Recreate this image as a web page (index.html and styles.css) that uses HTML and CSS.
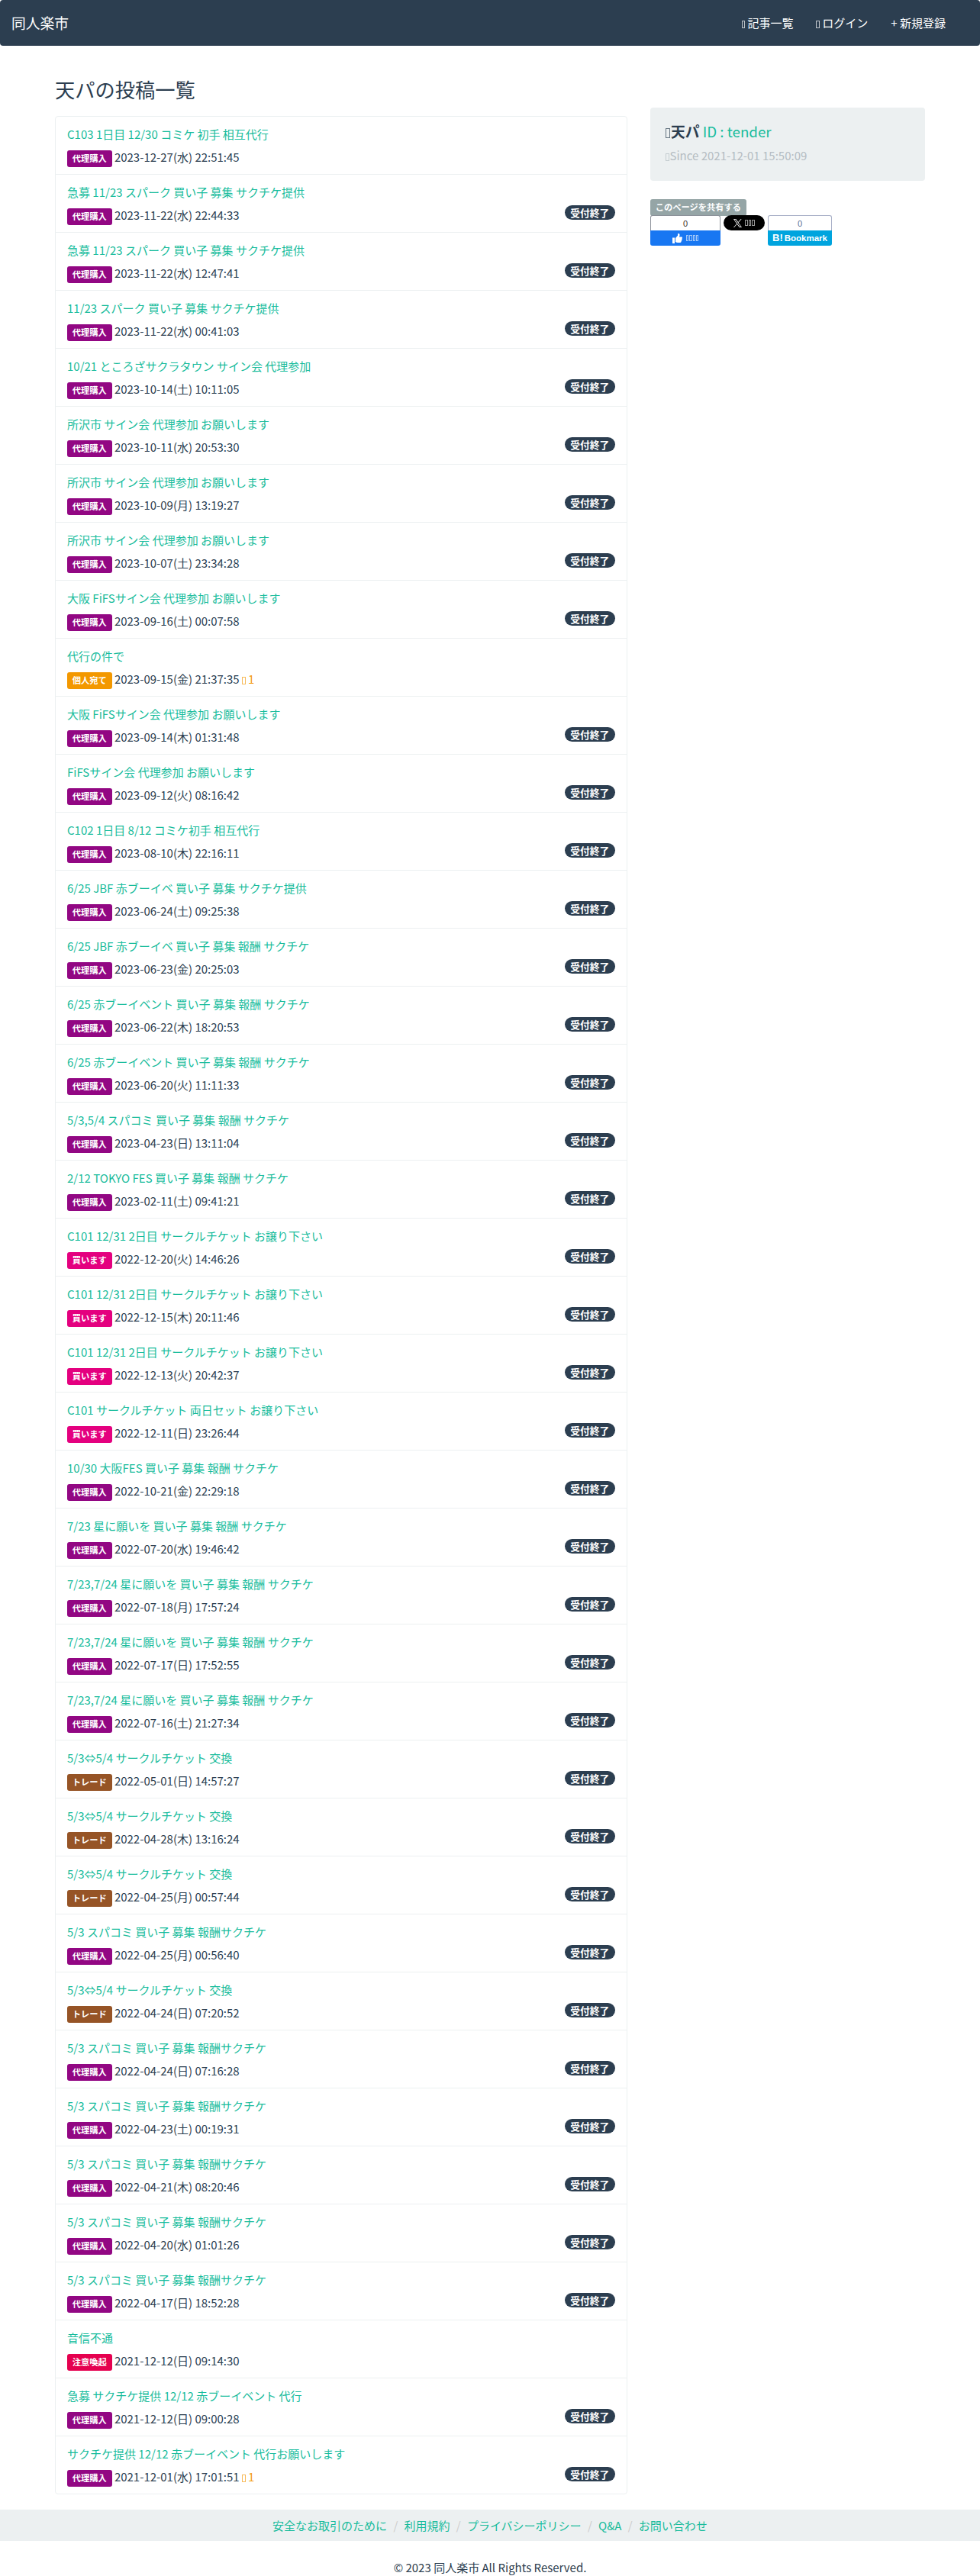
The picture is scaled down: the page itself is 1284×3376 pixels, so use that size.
FILE: index.html
```html
<!DOCTYPE html>
<html lang="ja">
<head>
<meta charset="utf-8">
<title>天パの投稿一覧 - 同人楽市</title>
<link rel="stylesheet" href="styles.css">
</head>
<body>
<header class="navbar">
  <a class="brand" href="#">同人楽市</a>
  <nav class="nav">
    <a href="#"><i class="glyph"></i> 記事一覧</a>
    <a href="#"><i class="glyph"></i> ログイン</a>
    <a href="#">+ 新規登録</a>
  </nav>
</header>
<div class="container">
  <main class="main">
    <h1 class="page-title">天パの投稿一覧</h1>
    <ul class="posts">
      <li><div><a href="#">C103 1日目 12/30 コミケ 初手 相互代行</a><p><b class="tag proxy">代理購入</b> 2023-12-27(水) 22:51:45</p></div></li>
      <li><div><a href="#">急募 11/23 スパーク 買い子 募集 サクチケ提供</a><p><b class="tag proxy">代理購入</b> 2023-11-22(水) 22:44:33</p></div><span class="closed">受付終了</span></li>
      <li><div><a href="#">急募 11/23 スパーク 買い子 募集 サクチケ提供</a><p><b class="tag proxy">代理購入</b> 2023-11-22(水) 12:47:41</p></div><span class="closed">受付終了</span></li>
      <li><div><a href="#">11/23 スパーク 買い子 募集 サクチケ提供</a><p><b class="tag proxy">代理購入</b> 2023-11-22(水) 00:41:03</p></div><span class="closed">受付終了</span></li>
      <li><div><a href="#">10/21 ところざサクラタウン サイン会 代理参加</a><p><b class="tag proxy">代理購入</b> 2023-10-14(土) 10:11:05</p></div><span class="closed">受付終了</span></li>
      <li><div><a href="#">所沢市 サイン会 代理参加 お願いします</a><p><b class="tag proxy">代理購入</b> 2023-10-11(水) 20:53:30</p></div><span class="closed">受付終了</span></li>
      <li><div><a href="#">所沢市 サイン会 代理参加 お願いします</a><p><b class="tag proxy">代理購入</b> 2023-10-09(月) 13:19:27</p></div><span class="closed">受付終了</span></li>
      <li><div><a href="#">所沢市 サイン会 代理参加 お願いします</a><p><b class="tag proxy">代理購入</b> 2023-10-07(土) 23:34:28</p></div><span class="closed">受付終了</span></li>
      <li><div><a href="#">大阪 FiFSサイン会 代理参加 お願いします</a><p><b class="tag proxy">代理購入</b> 2023-09-16(土) 00:07:58</p></div><span class="closed">受付終了</span></li>
      <li><div><a href="#">代行の件で</a><p><b class="tag personal">個人宛て</b> 2023-09-15(金) 21:37:35 <span class="comments"><i class="glyph"></i> 1</span></p></div></li>
      <li><div><a href="#">大阪 FiFSサイン会 代理参加 お願いします</a><p><b class="tag proxy">代理購入</b> 2023-09-14(木) 01:31:48</p></div><span class="closed">受付終了</span></li>
      <li><div><a href="#">FiFSサイン会 代理参加 お願いします</a><p><b class="tag proxy">代理購入</b> 2023-09-12(火) 08:16:42</p></div><span class="closed">受付終了</span></li>
      <li><div><a href="#">C102 1日目 8/12 コミケ初手 相互代行</a><p><b class="tag proxy">代理購入</b> 2023-08-10(木) 22:16:11</p></div><span class="closed">受付終了</span></li>
      <li><div><a href="#">6/25 JBF 赤ブーイベ 買い子 募集 サクチケ提供</a><p><b class="tag proxy">代理購入</b> 2023-06-24(土) 09:25:38</p></div><span class="closed">受付終了</span></li>
      <li><div><a href="#">6/25 JBF 赤ブーイベ 買い子 募集 報酬 サクチケ</a><p><b class="tag proxy">代理購入</b> 2023-06-23(金) 20:25:03</p></div><span class="closed">受付終了</span></li>
      <li><div><a href="#">6/25 赤ブーイベント 買い子 募集 報酬 サクチケ</a><p><b class="tag proxy">代理購入</b> 2023-06-22(木) 18:20:53</p></div><span class="closed">受付終了</span></li>
      <li><div><a href="#">6/25 赤ブーイベント 買い子 募集 報酬 サクチケ</a><p><b class="tag proxy">代理購入</b> 2023-06-20(火) 11:11:33</p></div><span class="closed">受付終了</span></li>
      <li><div><a href="#">5/3,5/4 スパコミ 買い子 募集 報酬 サクチケ</a><p><b class="tag proxy">代理購入</b> 2023-04-23(日) 13:11:04</p></div><span class="closed">受付終了</span></li>
      <li><div><a href="#">2/12 TOKYO FES 買い子 募集 報酬 サクチケ</a><p><b class="tag proxy">代理購入</b> 2023-02-11(土) 09:41:21</p></div><span class="closed">受付終了</span></li>
      <li><div><a href="#">C101 12/31 2日目 サークルチケット お譲り下さい</a><p><b class="tag buy">買います</b> 2022-12-20(火) 14:46:26</p></div><span class="closed">受付終了</span></li>
      <li><div><a href="#">C101 12/31 2日目 サークルチケット お譲り下さい</a><p><b class="tag buy">買います</b> 2022-12-15(木) 20:11:46</p></div><span class="closed">受付終了</span></li>
      <li><div><a href="#">C101 12/31 2日目 サークルチケット お譲り下さい</a><p><b class="tag buy">買います</b> 2022-12-13(火) 20:42:37</p></div><span class="closed">受付終了</span></li>
      <li><div><a href="#">C101 サークルチケット 両日セット お譲り下さい</a><p><b class="tag buy">買います</b> 2022-12-11(日) 23:26:44</p></div><span class="closed">受付終了</span></li>
      <li><div><a href="#">10/30 大阪FES 買い子 募集 報酬 サクチケ</a><p><b class="tag proxy">代理購入</b> 2022-10-21(金) 22:29:18</p></div><span class="closed">受付終了</span></li>
      <li><div><a href="#">7/23 星に願いを 買い子 募集 報酬 サクチケ</a><p><b class="tag proxy">代理購入</b> 2022-07-20(水) 19:46:42</p></div><span class="closed">受付終了</span></li>
      <li><div><a href="#">7/23,7/24 星に願いを 買い子 募集 報酬 サクチケ</a><p><b class="tag proxy">代理購入</b> 2022-07-18(月) 17:57:24</p></div><span class="closed">受付終了</span></li>
      <li><div><a href="#">7/23,7/24 星に願いを 買い子 募集 報酬 サクチケ</a><p><b class="tag proxy">代理購入</b> 2022-07-17(日) 17:52:55</p></div><span class="closed">受付終了</span></li>
      <li><div><a href="#">7/23,7/24 星に願いを 買い子 募集 報酬 サクチケ</a><p><b class="tag proxy">代理購入</b> 2022-07-16(土) 21:27:34</p></div><span class="closed">受付終了</span></li>
      <li><div><a href="#">5/3⇔5/4 サークルチケット 交換</a><p><b class="tag trade">トレード</b> 2022-05-01(日) 14:57:27</p></div><span class="closed">受付終了</span></li>
      <li><div><a href="#">5/3⇔5/4 サークルチケット 交換</a><p><b class="tag trade">トレード</b> 2022-04-28(木) 13:16:24</p></div><span class="closed">受付終了</span></li>
      <li><div><a href="#">5/3⇔5/4 サークルチケット 交換</a><p><b class="tag trade">トレード</b> 2022-04-25(月) 00:57:44</p></div><span class="closed">受付終了</span></li>
      <li><div><a href="#">5/3 スパコミ 買い子 募集 報酬サクチケ</a><p><b class="tag proxy">代理購入</b> 2022-04-25(月) 00:56:40</p></div><span class="closed">受付終了</span></li>
      <li><div><a href="#">5/3⇔5/4 サークルチケット 交換</a><p><b class="tag trade">トレード</b> 2022-04-24(日) 07:20:52</p></div><span class="closed">受付終了</span></li>
      <li><div><a href="#">5/3 スパコミ 買い子 募集 報酬サクチケ</a><p><b class="tag proxy">代理購入</b> 2022-04-24(日) 07:16:28</p></div><span class="closed">受付終了</span></li>
      <li><div><a href="#">5/3 スパコミ 買い子 募集 報酬サクチケ</a><p><b class="tag proxy">代理購入</b> 2022-04-23(土) 00:19:31</p></div><span class="closed">受付終了</span></li>
      <li><div><a href="#">5/3 スパコミ 買い子 募集 報酬サクチケ</a><p><b class="tag proxy">代理購入</b> 2022-04-21(木) 08:20:46</p></div><span class="closed">受付終了</span></li>
      <li><div><a href="#">5/3 スパコミ 買い子 募集 報酬サクチケ</a><p><b class="tag proxy">代理購入</b> 2022-04-20(水) 01:01:26</p></div><span class="closed">受付終了</span></li>
      <li><div><a href="#">5/3 スパコミ 買い子 募集 報酬サクチケ</a><p><b class="tag proxy">代理購入</b> 2022-04-17(日) 18:52:28</p></div><span class="closed">受付終了</span></li>
      <li><div><a href="#">音信不通</a><p><b class="tag alert">注意喚起</b> 2021-12-12(日) 09:14:30</p></div></li>
      <li><div><a href="#">急募 サクチケ提供 12/12 赤ブーイベント 代行</a><p><b class="tag proxy">代理購入</b> 2021-12-12(日) 09:00:28</p></div><span class="closed">受付終了</span></li>
      <li><div><a href="#">サクチケ提供 12/12 赤ブーイベント 代行お願いします</a><p><b class="tag proxy">代理購入</b> 2021-12-01(水) 17:01:51 <span class="comments"><i class="glyph"></i> 1</span></p></div><span class="closed">受付終了</span></li>
    </ul>
  </main>
  <aside class="side">
    <section class="profile">
      <p class="name"><i class="glyph"></i><b>天パ</b> <a href="#">ID : tender</a></p>
      <p class="since"><i class="glyph"></i>Since 2021-12-01 15:50:09</p>
    </section>
    <b class="tag share-label">このページを共有する</b>
    <div class="share">
      <div class="share-box facebook">
        <span class="count">0</span>
        <a class="action" href="#">
          <svg width="13" height="13" viewBox="0 0 13 13"><path fill="#fff" d="M0 5.5h3V13H0zM4 6l3-3.2V1c0-.7.5-1 1-1 1 0 1.600.8 1.600 1.900L9 4.600h3c.7 0 1 .5 1 1.100 0 .5-.2.800-.5 1 .2.300.3.600.2 1-.1.400-.3.600-.6.800.2.700.1 1.300-.5 1.600.2 1-.3 1.900-1.500 1.900H7c-1.200 0-2-.4-3-.9z"/></svg>
          <span class="boxes"><i></i><i></i><i></i><i></i></span>
        </a>
      </div>
      <a class="xpost" href="#">
        <svg width="11" height="11" viewBox="0 0 24 24"><path fill="#fff" d="M14.300 10.200 23.200 0h-2.100l-7.700 8.800L7.200 0H0l9.300 13.400L0 24h2.100l8.100-9.300L16.800 24H24zM2.900 1.600h3.200l15 20.900h-3.200z"/></svg>
        <span class="boxes"><i></i><i></i><i></i></span>
      </a>
      <div class="share-box hatena">
        <span class="count">0</span>
        <a class="action" href="#"><b class="mark">B!</b><b>Bookmark</b></a>
      </div>
    </div>
  </aside>
</div>
<footer>
  <nav class="footer-nav">
    <a href="#">安全なお取引のために</a><a href="#">利用規約</a><a href="#">プライバシーポリシー</a><a href="#">Q&amp;A</a><a href="#">お問い合わせ</a>
  </nav>
  <p class="copyright">© 2023 同人楽市 All Rights Reserved.</p>
</footer>
</body>
</html>
```
FILE: styles.css
```css
* { box-sizing: border-box; }

body {
  margin: 0;
  font: 15px/22.5px "Noto Sans CJK JP", sans-serif;
  color: #2c3e50;
  background: #fff;
}

p, h1, ul { margin: 0; padding: 0; }
a { color: #18bc9c; text-decoration: none; }

.glyph {
  display: inline-block;
  width: 4.5px;
  height: 10px;
  border: 1px solid;
  opacity: .7;
  vertical-align: -1px;
}

/* header */
.navbar {
  display: flex;
  justify-content: space-between;
  align-items: center;
  height: 60px;
  padding: 0 30px 0 15px;
  border-radius: 4px;
  background: #2c3e50;
}
.navbar a { color: #fff; }
.brand { font-size: 18.75px; line-height: 28px; }
.nav { display: flex; padding-top: 1px; }
.nav a { padding: 0 15px; }

/* columns */
.container {
  display: grid;
  grid-template-columns: 750px 360px;
  gap: 30px;
  width: 1140px;
  margin: 0 auto;
}
.page-title {
  margin: 42px 0 19px;
  font-size: 26.25px;
  line-height: 31px;
  font-weight: 400;
}

/* post list */
.posts {
  list-style: none;
  border: 1px solid #ecf0f1;
  border-radius: 4px;
}
.posts li {
  display: flex;
  justify-content: space-between;
  height: 76px;
  padding: 12px 15px;
  border-bottom: 1px solid #ecf0f1;
}
.posts li:last-child { height: 75px; border-bottom: 0; }
.posts li > div > a { display: block; line-height: 22px; }
.posts p { margin-top: 8px; }
.comments { color: #f39c12; }

.tag {
  display: inline-block;
  padding: 5px 6.75px 6px;
  border-radius: 3px;
  color: #fff;
  font-size: 11.25px;
  line-height: 11px;
  font-weight: 700;
}
.proxy { background: #920783; }
.personal { background: #f39800; }
.buy { background: #e4007f; }
.trade { background: #965426; }
.alert { background: #e5004f; }

.closed {
  align-self: flex-end;
  margin-bottom: 4px;
  padding: 0 7.65px;
  border-radius: 10px;
  background: #2c3e50;
  color: #fff;
  font-size: 12.75px;
  line-height: 19px;
  font-weight: 700;
}

/* sidebar */
.side { padding-top: 81px; }
.profile {
  height: 96px;
  margin-bottom: 24px;
  padding: 17px 20px;
  border-radius: 4px;
  background: #ecf0f1;
}
.name { font-size: 18.75px; line-height: 28px; }
.name .glyph { width: 6px; height: 13px; margin-right: 1px; }
.since { margin-top: 7px; color: #b4bcc2; }
.since .glyph { margin-right: 1px; }
.share-label { display: block; width: max-content; background: #95a5a6; }
.share {
  display: flex;
  align-items: flex-start;
  gap: 4px;
  margin-top: -1px;
  font: 11px/20px "Liberation Sans", sans-serif;
}
.share-box { text-align: center; }
.facebook { width: 92px; }
.hatena { width: 84px; }
.count {
  display: block;
  height: 20px;
  border: 1px solid #8b9099;
  border-bottom: 0;
  border-radius: 3px 3px 0 0;
  color: #333;
}
.hatena .count { border-color: #a6aec6; color: #5a6b94; }
.action {
  display: flex;
  justify-content: center;
  align-items: center;
  gap: 5px;
  height: 20px;
  border-radius: 0 0 3px 3px;
  background: #1877f2;
  color: #fff;
}
.hatena .action { gap: 2px; background: #00a4de; font-size: 11.5px; }
.hatena .mark { font-size: 13px; }
.xpost {
  display: flex;
  justify-content: center;
  align-items: center;
  gap: 4px;
  width: 54px;
  height: 20px;
  border-radius: 10px;
  background: #000;
}
.boxes { display: flex; gap: 1px; opacity: .6; }
.boxes i { width: 3.4px; height: 8px; border: 1px solid #fff; }

/* footer */
.footer-nav {
  display: flex;
  justify-content: center;
  height: 41px;
  margin-top: 20px;
  background: #ecf0f1;
  line-height: 41px;
}
.footer-nav a + a::before { content: "/"; padding: 0 8.25px; color: #ccc; }
.copyright { padding: 23px 0 0; text-align: center; line-height: 23px; }
```
